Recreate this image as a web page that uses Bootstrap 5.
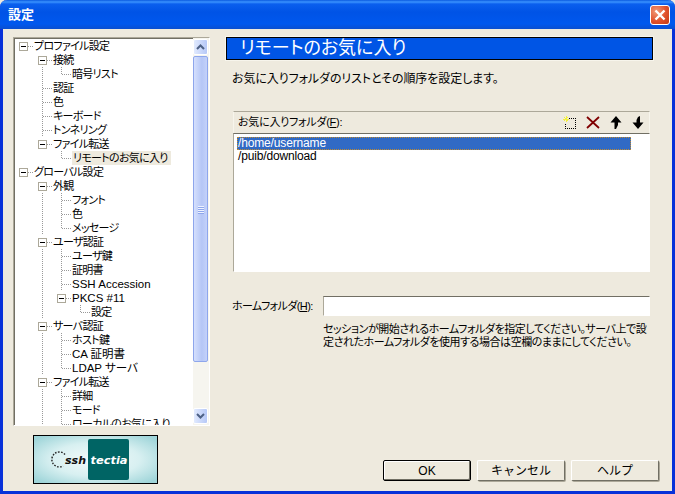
<!DOCTYPE html>
<html lang="ja">
  <head>
    <meta charset="utf-8" />
    <title>設定</title>
    <link href="https://cdn.jsdelivr.net/npm/bootstrap@5.3.3/dist/css/bootstrap.min.css" rel="stylesheet" />
    <style>
      html, body { height: 100%; }
      body {
        background: #eeeade;
        color: #000;
        font: 12px/14px "Liberation Sans", "Noto Sans CJK JP", sans-serif;
        font-feature-settings: "palt";
        overflow: hidden;
      }
      .xp-window { width: 675px; height: 494px; background: #eeeade; border: solid #0831d9; border-width: 0 3px 3px 3px; border-radius: 7px 7px 0 0; }
      .xp-title { height: 29px; margin: 0 -3px; padding: 0 5px 0 8px; border-radius: 7px 7px 0 0; background: linear-gradient(#0a5ae0 0, #3a93ff 2px, #0a5fee 4px, #0053e6 12px, #0058ee 24px, #0a4fd0 29px); color: #fff; font-size: 13px; font-weight: 700; }
      .xp-close { width: 20px; height: 20px; padding: 0; border: 1px solid #fff; border-radius: 3px; background: radial-gradient(circle at 30% 30%, #f09a78, #e0512c 55%, #c23a14); }
      .xp-close svg { display: block; margin: auto; }

      .side-col { width: 197px; margin-left: 10px; }
      .main-col { width: 427px; margin-left: 16px; }

      .tree-box { height: 389px; border: 1px solid; border-color: #aca899 #fff #fff #aca899; background: #fff; box-shadow: inset 1px 1px 0 #716f64; }
      .tree-rows { width: 178px; padding-top: 1px; overflow: hidden; font-size: 11px; letter-spacing: -.7px; }
      .tree-row { height: 14px; white-space: nowrap; }
      .tc { width: 19px; height: 14px; flex: none; display: flex; align-items: center; background-repeat: no-repeat; }
      .tc-v, .tc-t { background-image: repeating-linear-gradient(#999 0 1px, transparent 1px 2px); background-size: 1px 100%; background-position: 9px 0; }
      .tc-t, .tc-l, .tc-b { --dots: repeating-linear-gradient(90deg, #999 0 1px, transparent 1px 2px); }
      .tc-t { background-image: repeating-linear-gradient(#999 0 1px, transparent 1px 2px), var(--dots); background-size: 1px 100%, 9px 1px; background-position: 9px 0, 10px 7px; }
      .tc-l { background-image: repeating-linear-gradient(#999 0 1px, transparent 1px 2px), var(--dots); background-size: 1px 8px, 9px 1px; background-position: 9px 0, 10px 7px; }
      .tc-b { background-image: var(--dots); background-size: 5px 1px; background-position: 14px 7px; }
      .tc-b i { display: block; width: 9px; height: 9px; margin-left: 5px; border: 1px solid #aca899; background: #fff linear-gradient(#000, #000) center / 5px 1px no-repeat; }
      .tree-sel { background: #eeeade; margin-left: 0; padding: 0 3px 0 1px; }
      .tree-txt { margin-left: 1px; }
      .tree-lat { font-size: 11.5px; letter-spacing: 0; }

      .xp-scroll { width: 16px; padding: 1px 0; background: #f6f5ef; }
      .xp-arrow { height: 16px; margin: 0 1px 0 0; border: 1px solid #fff; border-radius: 2px; background: linear-gradient(90deg, #e1eafe, #b6c8f7); display: flex; align-items: center; justify-content: center; }
      .xp-thumb { height: 306px; margin: 1px 1px 0 0; border: 1px solid #8ea6ec; border-radius: 2px; background: linear-gradient(90deg, #d5e0fd, #b5c6f6 60%, #c3d1fa); display: flex; flex-direction: column; align-items: center; justify-content: center; gap: 1px; }
      .xp-thumb i { display: block; width: 6px; height: 1px; background: #eef3ff; box-shadow: 0 1px 0 #8ea6ec; }

      .brand-box { width: 125px; height: 49px; margin: 9px 0 0 20px; border: 1px solid #000; }

      .page-head { height: 23px; padding-left: 13px; background: #0055e5; border: 1px solid #000; outline: 1px solid #f7f5ec; color: #fff; font-size: 18px; line-height: 20px; white-space: nowrap; }
      .page-desc { margin: 12px 0 0 6px; letter-spacing: -.08px; }
      .fav-head { height: 22px; margin: 25px 3px 0 7px; padding: 0 5px 1px 4px; border-top: 1px solid #aca899; border-left: 1px solid #f7f5ec; border-right: 1px solid #f7f5ec; }
      .fav-title { font-size: 11px; letter-spacing: -.25px; }
      .fav-list { height: 139px; margin: 0 3px 0 7px; padding: 3px 18px 0 3px; background: #fff; border: 1px solid; border-color: #716f64 #fff #fff #aca899; letter-spacing: -.15px; }
      .fav-item { height: 13px; line-height: 13px; padding-left: 1px; }
      .fav-on { background: #316ac5; color: #fff; outline: 1px dotted #c08a30; outline-offset: -1px; }
      .tool-icons { gap: 10px; }
      .home-row { margin: 24px 3px 0 6px; }
      .home-label { width: 91px; flex: none; font-size: 11px; letter-spacing: -.6px; white-space: nowrap; }
      .home-input { height: 20px; padding: 0; border: 1px solid; border-color: #716f64 #fff #fff #aca899; border-radius: 0; background: #fff; }
      .home-help { margin: 7px 0 0 97px; line-height: 13px; font-size: 11px; letter-spacing: -.45px; white-space: nowrap; }

      .xp-btn { width: 88px; height: 21px; padding: 0; border: 1px solid; border-color: #fff #716f64 #716f64 #fff; border-radius: 2px; background: #eeeade; box-shadow: 1px 1px 0 #aca899; color: #000; font-size: 12px; line-height: 18px; }
      .xp-btn.is-default { border: 1px solid #000; box-shadow: inset -1px -1px 0 #716f64, inset 1px 1px 0 #fff; }
      .btn-bar { gap: 6px; margin: auto 0 10px 157px; width: 277px; }
      .crisp { shape-rendering: crispEdges; }
    </style>
  </head>
  <body>
    <div class="xp-window d-flex flex-column">
      <div class="xp-title d-flex align-items-center justify-content-between">
        <span>設定</span>
        <button class="xp-close" aria-label="閉じる">
          <svg width="12" height="12" viewBox="0 0 12 12"><path d="M1.5 1.5l9 9M10.5 1.5l-9 9" stroke="#fff" stroke-width="2.4" /></svg>
        </button>
      </div>

      <div class="d-flex flex-grow-1">
        <!-- left: settings tree and logo -->
        <div class="side-col">
          <div class="tree-box d-flex justify-content-between mt-2">
            <div class="tree-rows">
              <div class="tree-row d-flex"><span class="tc tc-b"><i></i></span><span class="tree-txt">プロファイル設定</span></div>
              <div class="tree-row d-flex"><span class="tc"></span><span class="tc tc-b"><i></i></span><span class="tree-txt">接続</span></div>
              <div class="tree-row d-flex"><span class="tc"></span><span class="tc tc-v"></span><span class="tc tc-l"></span><span class="tree-txt">暗号リスト</span></div>
              <div class="tree-row d-flex"><span class="tc"></span><span class="tc tc-t"></span><span class="tree-txt">認証</span></div>
              <div class="tree-row d-flex"><span class="tc"></span><span class="tc tc-t"></span><span class="tree-txt">色</span></div>
              <div class="tree-row d-flex"><span class="tc"></span><span class="tc tc-t"></span><span class="tree-txt">キーボード</span></div>
              <div class="tree-row d-flex"><span class="tc"></span><span class="tc tc-t"></span><span class="tree-txt">トンネリング</span></div>
              <div class="tree-row d-flex"><span class="tc"></span><span class="tc tc-b"><i></i></span><span class="tree-txt">ファイル転送</span></div>
              <div class="tree-row d-flex"><span class="tc"></span><span class="tc"></span><span class="tc tc-l"></span><span class="tree-txt tree-sel">リモートのお気に入り</span></div>
              <div class="tree-row d-flex"><span class="tc tc-b"><i></i></span><span class="tree-txt">グローバル設定</span></div>
              <div class="tree-row d-flex"><span class="tc"></span><span class="tc tc-b"><i></i></span><span class="tree-txt">外観</span></div>
              <div class="tree-row d-flex"><span class="tc"></span><span class="tc tc-v"></span><span class="tc tc-t"></span><span class="tree-txt">フォント</span></div>
              <div class="tree-row d-flex"><span class="tc"></span><span class="tc tc-v"></span><span class="tc tc-t"></span><span class="tree-txt">色</span></div>
              <div class="tree-row d-flex"><span class="tc"></span><span class="tc tc-v"></span><span class="tc tc-l"></span><span class="tree-txt">メッセージ</span></div>
              <div class="tree-row d-flex"><span class="tc"></span><span class="tc tc-b"><i></i></span><span class="tree-txt">ユーザ認証</span></div>
              <div class="tree-row d-flex"><span class="tc"></span><span class="tc tc-v"></span><span class="tc tc-t"></span><span class="tree-txt">ユーザ鍵</span></div>
              <div class="tree-row d-flex"><span class="tc"></span><span class="tc tc-v"></span><span class="tc tc-t"></span><span class="tree-txt">証明書</span></div>
              <div class="tree-row d-flex"><span class="tc"></span><span class="tc tc-v"></span><span class="tc tc-t"></span><span class="tree-txt tree-lat">SSH Accession</span></div>
              <div class="tree-row d-flex"><span class="tc"></span><span class="tc tc-v"></span><span class="tc tc-b"><i></i></span><span class="tree-txt tree-lat">PKCS #11</span></div>
              <div class="tree-row d-flex"><span class="tc"></span><span class="tc tc-v"></span><span class="tc"></span><span class="tc tc-l"></span><span class="tree-txt">設定</span></div>
              <div class="tree-row d-flex"><span class="tc"></span><span class="tc tc-b"><i></i></span><span class="tree-txt">サーバ認証</span></div>
              <div class="tree-row d-flex"><span class="tc"></span><span class="tc tc-v"></span><span class="tc tc-t"></span><span class="tree-txt">ホスト鍵</span></div>
              <div class="tree-row d-flex"><span class="tc"></span><span class="tc tc-v"></span><span class="tc tc-t"></span><span class="tree-txt tree-lat">CA 証明書</span></div>
              <div class="tree-row d-flex"><span class="tc"></span><span class="tc tc-v"></span><span class="tc tc-l"></span><span class="tree-txt tree-lat">LDAP サーバ</span></div>
              <div class="tree-row d-flex"><span class="tc"></span><span class="tc tc-b"><i></i></span><span class="tree-txt">ファイル転送</span></div>
              <div class="tree-row d-flex"><span class="tc"></span><span class="tc tc-v"></span><span class="tc tc-t"></span><span class="tree-txt">詳細</span></div>
              <div class="tree-row d-flex"><span class="tc"></span><span class="tc tc-v"></span><span class="tc tc-t"></span><span class="tree-txt">モード</span></div>
              <div class="tree-row d-flex"><span class="tc"></span><span class="tc tc-v"></span><span class="tc tc-t"></span><span class="tree-txt">ローカルのお気に入り</span></div>
            </div>
            <div class="xp-scroll d-flex flex-column">
              <div class="xp-arrow"><svg width="9" height="6" viewBox="0 0 9 6"><path d="M1 5l3.5-3.5L8 5" fill="none" stroke="#4d6185" stroke-width="2" /></svg></div>
              <div class="xp-thumb"><i></i><i></i><i></i><i></i></div>
              <div class="xp-arrow mt-auto"><svg width="9" height="6" viewBox="0 0 9 6"><path d="M1 1l3.5 3.5L8 1" fill="none" stroke="#4d6185" stroke-width="2" /></svg></div>
            </div>
          </div>
          <div class="brand-box">
            <svg class="d-block" width="123" height="47" viewBox="0 0 123 47">
              <defs>
                <radialGradient id="logo-bg" cx="50%" cy="50%" r="65%">
                  <stop offset="0" stop-color="#f4fbfb" />
                  <stop offset="0.55" stop-color="#d8f0f1" />
                  <stop offset="1" stop-color="#9fd5d9" />
                </radialGradient>
              </defs>
              <rect width="123" height="47" fill="url(#logo-bg)" />
              <rect x="54" y="3" width="41" height="41" rx="2" fill="#006464" />
              <path d="M31 18.5A7.5 7.5 0 1 0 29 30" fill="none" stroke="#222" stroke-width="1.4" stroke-dasharray="1.6 1.4" />
              <text x="31" y="28" textLength="21" lengthAdjust="spacingAndGlyphs" font-family="DejaVu Sans" font-size="10.5" font-weight="700" font-style="italic" fill="#111">ssh</text>
              <text x="56.5" y="28" textLength="37" lengthAdjust="spacingAndGlyphs" font-family="DejaVu Sans" font-size="10.5" font-weight="700" font-style="italic" fill="#fff">tectia</text>
            </svg>
          </div>
        </div>

        <!-- right: favorites page -->
        <div class="main-col d-flex flex-column">
          <div class="page-head mt-2">リモートのお気に入り</div>
          <div class="page-desc">お気に入りフォルダのリストとその順序を設定します。</div>
          <div class="fav-head d-flex align-items-center justify-content-between">
            <span class="fav-title">お気に入りフォルダ(<u>F</u>):</span>
            <span class="tool-icons d-flex align-items-center">
              <svg class="crisp" width="13" height="13" viewBox="0 0 13 13"><path d="M6 2.5h6.5v10h-10v-6" fill="none" stroke="#000" stroke-dasharray="1 1" /><path d="M3 0v6M0 3h6M1 1l4 4M5 1l-4 4" stroke="#f4f03c" /></svg>
              <svg width="14" height="13" viewBox="0 0 14 13"><path d="M1 1l12 11M13 1L1 12" stroke="#800000" stroke-width="1.8" /></svg>
              <svg width="12" height="13" viewBox="0 0 12 13"><path d="M6 0l5.5 6.5H8V9L6 13H4.5V6.5H.5z" /></svg>
              <svg width="12" height="13" viewBox="0 0 12 13"><path d="M8 0L6 1 4.5 4v2.5H.5L6 13l5.5-6.5H8z" /></svg>
            </span>
          </div>
          <div class="fav-list">
            <div class="fav-item fav-on">/home/username</div>
            <div class="fav-item">/puib/download</div>
          </div>
          <div class="home-row d-flex align-items-center">
            <label class="home-label">ホームフォルダ(<u>H</u>):</label>
            <input class="home-input form-control flex-grow-1" type="text" />
          </div>
          <div class="home-help">セッションが開始されるホームフォルダを指定してください。サーバ上で設<br />定されたホームフォルダを使用する場合は空欄のままにしてください。</div>
          <div class="btn-bar d-flex">
            <button class="xp-btn is-default">OK</button>
            <button class="xp-btn">キャンセル</button>
            <button class="xp-btn">ヘルプ</button>
          </div>
        </div>
      </div>
    </div>
    <script src="https://cdn.jsdelivr.net/npm/bootstrap@5.3.3/dist/js/bootstrap.bundle.min.js"></script>
  </body>
</html>
